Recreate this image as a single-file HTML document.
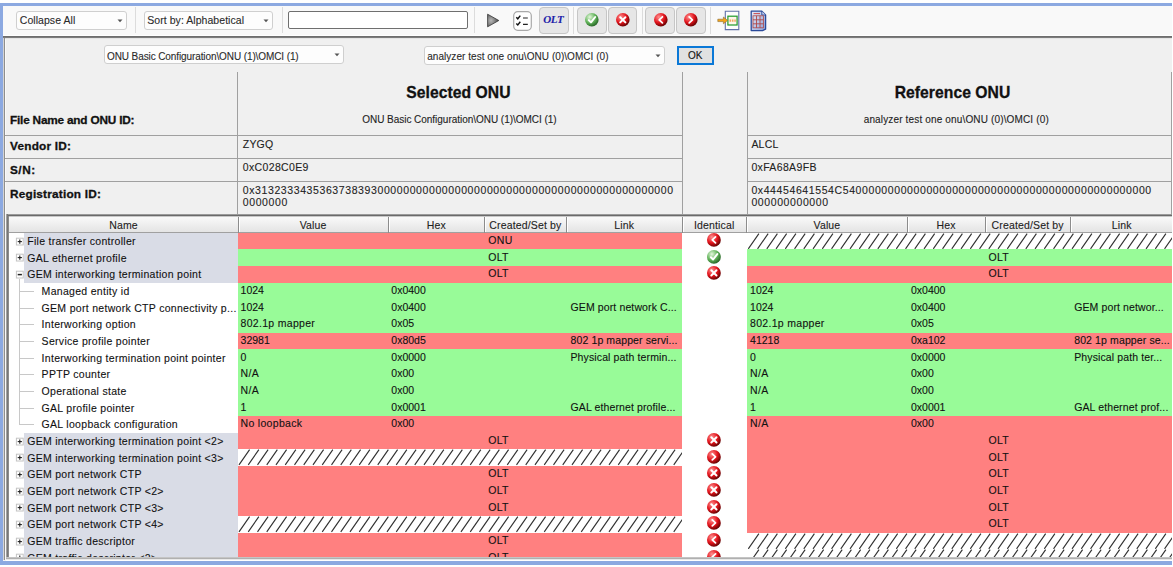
<!DOCTYPE html><html><head><meta charset="utf-8"><style>
html,body{margin:0;padding:0;}
body{width:1173px;height:567px;overflow:hidden;position:relative;background:#fff;font-family:"Liberation Sans",sans-serif;}
.t{position:absolute;white-space:pre;line-height:1;-webkit-text-stroke:0.1px currentColor;}
div{box-sizing:border-box;}
</style></head><body>
<div style="position:absolute;left:0px;top:3px;width:1173px;height:562px;background:#8ca9e1;"></div>
<div style="position:absolute;left:3px;top:6px;width:1170px;height:30px;background:#f9f9f9;"></div>
<div style="position:absolute;left:3px;top:35px;width:1170px;height:1px;background:#ffffff;"></div>
<div style="position:absolute;left:3px;top:36px;width:1170px;height:1px;background:#6e6e6e;"></div>
<div style="position:absolute;left:3px;top:37px;width:1170px;height:1px;background:#7c7c7c;"></div>
<div style="position:absolute;left:3px;top:38px;width:1170px;height:523px;background:#f0f0f0;"></div>
<div style="position:absolute;left:3px;top:38px;width:1px;height:522px;background:#d4d4d4;"></div>
<div style="position:absolute;left:4px;top:38px;width:1px;height:522px;background:#8e8e8e;"></div>
<div style="position:absolute;left:5px;top:38px;width:1px;height:522px;background:#fafafa;"></div>
<div style="position:absolute;left:5px;top:38px;width:1168px;height:1px;background:#e4e4e4;"></div>
<div style="position:absolute;left:3px;top:560px;width:1170px;height:1px;background:#f4f4f4;"></div>
<div style="position:absolute;left:16px;top:11.4px;width:110.6px;height:18.2px;background:#fdfdfd;border:1px solid #cfcfcf;border-radius:3px;"></div>
<div class="t" style="left:19.8px;top:15px;font-size:10.5px;letter-spacing:0.05px;color:#2a2a2a;font-weight:normal;-webkit-text-stroke:0.1px #2a2a2a;">Collapse All</div>
<svg style="position:absolute;left:116.6px;top:19.0px" width="6" height="4"><path d="M0.5 0.5 L5.5 0.5 L3 3.2 Z" fill="#555"/></svg>
<div style="position:absolute;left:135px;top:7px;width:1px;height:26px;background:#dcdcdc;"></div>
<div style="position:absolute;left:143.5px;top:11.4px;width:129px;height:18.2px;background:#fdfdfd;border:1px solid #cfcfcf;border-radius:3px;"></div>
<div class="t" style="left:147.3px;top:15px;font-size:10.5px;letter-spacing:0.05px;color:#2a2a2a;font-weight:normal;-webkit-text-stroke:0.1px #2a2a2a;">Sort by: Alphabetical</div>
<svg style="position:absolute;left:262.5px;top:19.0px" width="6" height="4"><path d="M0.5 0.5 L5.5 0.5 L3 3.2 Z" fill="#555"/></svg>
<div style="position:absolute;left:282px;top:7px;width:1px;height:26px;background:#dcdcdc;"></div>
<div style="position:absolute;left:287.6px;top:11.2px;width:180px;height:17.4px;background:#fff;border:1.5px solid #6f6f6f;border-radius:2px;"></div>
<div style="position:absolute;left:474px;top:7px;width:1px;height:26px;background:#dcdcdc;"></div>
<svg style="position:absolute;left:486px;top:13px" width="14" height="15"><defs><radialGradient id="pg" cx="0.3" cy="0.5" r="0.8"><stop offset="0" stop-color="#b8b8b8"/><stop offset="1" stop-color="#3c3c3c"/></radialGradient></defs><path d="M1.6 1.2 L12.8 7.5 L1.6 13.8 Z" fill="url(#pg)" stroke="#333" stroke-width="0.8" stroke-linejoin="round"/></svg>
<svg style="position:absolute;left:513px;top:11px" width="19" height="20"><rect x="0.7" y="0.7" width="17.6" height="18.6" rx="4" fill="#fff" stroke="#a9a9a9" stroke-width="1.2"/><path d="M3.3 6.2 L4.8 7.8 L7.3 4.6 M3.3 12.4 L4.8 14 L7.3 10.8" fill="none" stroke="#111" stroke-width="1.4"/><path d="M10 7 H14.8 M10 13.3 H14.8" stroke="#222" stroke-width="1.2"/></svg>
<div style="position:absolute;left:539.1px;top:7.1px;width:29.7px;height:27px;background:#e6e6e6;border:1px solid #c6c6c6;border-radius:4px;"></div>
<div class="t" style="left:543.2px;top:13.5px;font-family:'Liberation Serif',serif;font-style:italic;font-weight:bold;font-size:11px;color:#1f1faa;letter-spacing:-0.35px;">OLT</div>
<div style="position:absolute;left:573px;top:7px;width:1px;height:27px;background:#dcdcdc;"></div>
<div style="position:absolute;left:576.6px;top:7.1px;width:30px;height:27px;background:#e6e6e6;border:1px solid #c6c6c6;border-radius:4px;"></div>
<div style="position:absolute;left:607.7px;top:7.1px;width:29.8px;height:27px;background:#e6e6e6;border:1px solid #c6c6c6;border-radius:4px;"></div>
<div style="position:absolute;left:641.5px;top:7px;width:1px;height:27px;background:#dcdcdc;"></div>
<div style="position:absolute;left:645.2px;top:7.1px;width:29.8px;height:27px;background:#e6e6e6;border:1px solid #c6c6c6;border-radius:4px;"></div>
<div style="position:absolute;left:676.3px;top:7.1px;width:29.7px;height:27px;background:#e6e6e6;border:1px solid #c6c6c6;border-radius:4px;"></div>
<div style="position:absolute;left:710px;top:7px;width:1px;height:27px;background:#dcdcdc;"></div>
<svg style="position:absolute;left:584.20px;top:12.20px" width="15.6" height="15.6"><defs><radialGradient id="g33" cx="0.35" cy="0.3" r="0.75"><stop offset="0" stop-color="#e4f6dc"/><stop offset="0.55" stop-color="#62b45a"/><stop offset="1" stop-color="#235f23"/></radialGradient></defs><circle cx="7.8" cy="7.8" r="6.8" fill="url(#g33)"/><path d="M4.8 8.1 L7.0 10.4 L11.2 5.0" fill="none" stroke="#fff" stroke-width="2" stroke-linecap="round" stroke-linejoin="round"/></svg>
<svg style="position:absolute;left:614.80px;top:12.00px" width="15.6" height="15.6"><defs><radialGradient id="g34" cx="0.35" cy="0.3" r="0.75"><stop offset="0" stop-color="#ff9090"/><stop offset="0.55" stop-color="#e3141c"/><stop offset="1" stop-color="#5a0000"/></radialGradient></defs><circle cx="7.8" cy="7.8" r="6.8" fill="url(#g34)"/><path d="M5.199999999999999 5.199999999999999 L10.4 10.4 M10.4 5.199999999999999 L5.199999999999999 10.4" stroke="#fff" stroke-width="2" stroke-linecap="round"/></svg>
<svg style="position:absolute;left:652.70px;top:12.00px" width="15.6" height="15.6"><defs><radialGradient id="g35" cx="0.35" cy="0.3" r="0.75"><stop offset="0" stop-color="#ff9090"/><stop offset="0.55" stop-color="#e3141c"/><stop offset="1" stop-color="#5a0000"/></radialGradient></defs><circle cx="7.8" cy="7.8" r="6.8" fill="url(#g35)"/><path d="M9.4 4.8 L6.199999999999999 7.8 L9.4 10.8" fill="none" stroke="#fff" stroke-width="1.8" stroke-linecap="round" stroke-linejoin="round"/></svg>
<svg style="position:absolute;left:683.00px;top:12.00px" width="15.6" height="15.6"><defs><radialGradient id="g36" cx="0.35" cy="0.3" r="0.75"><stop offset="0" stop-color="#ff9090"/><stop offset="0.55" stop-color="#e3141c"/><stop offset="1" stop-color="#5a0000"/></radialGradient></defs><circle cx="7.8" cy="7.8" r="6.8" fill="url(#g36)"/><path d="M6.199999999999999 4.8 L9.4 7.8 L6.199999999999999 10.8" fill="none" stroke="#fff" stroke-width="1.8" stroke-linecap="round" stroke-linejoin="round"/></svg>
<svg style="position:absolute;left:717px;top:10px" width="23" height="21"><path d="M8.3 1.2 H21.8 V19.6 H8.3 Z" fill="#fdfdfd" stroke="#6070a8" stroke-width="1.1"/><rect x="10.9" y="6.2" width="9.2" height="8.8" fill="#fff6ea" stroke="#1f9a2a" stroke-width="1.2"/><path d="M12.5 10.6 H18.8" stroke="#f2a860" stroke-width="2.2" stroke-dasharray="1.6 0.8"/><path d="M0.8 9.2 H6.4 V7 L10.6 10.4 L6.4 13.8 V11.6 H0.8 Z" fill="#f4a416" stroke="#8a6a30" stroke-width="0.6" stroke-linejoin="round"/></svg>
<svg style="position:absolute;left:750px;top:10px" width="17" height="22"><defs><linearGradient id="rg" x1="0" y1="0" x2="1" y2="1"><stop offset="0" stop-color="#e8ecf8"/><stop offset="1" stop-color="#8aa0d8"/></linearGradient></defs><path d="M1.2 1.2 H11.8 L15.6 5 V19.2 L12.5 20.6 H1.2 Z" fill="url(#rg)" stroke="#2a4a9a" stroke-width="1.3" stroke-linejoin="round"/><path d="M11.8 1.2 V5 H15.6" fill="#c8d2ee" stroke="#2a4a9a" stroke-width="0.9"/><path d="M3.5 3.6 H10" stroke="#c83a3a" stroke-width="0.9"/><rect x="3" y="5.8" width="10.4" height="12" fill="none" stroke="#b04848" stroke-width="0.8"/><path d="M3 9.8 H13.4 M3 13.8 H13.4 M6.5 5.8 V17.8 M10 5.8 V17.8" stroke="#b04848" stroke-width="0.9"/></svg>
<div style="position:absolute;left:104.3px;top:45.2px;width:240px;height:18.8px;background:#fdfdfd;border:1px solid #cfcfcf;border-radius:3px;"></div>
<div class="t" style="left:107.0px;top:52px;font-size:10px;letter-spacing:-0.1px;color:#2a2a2a;font-weight:normal;-webkit-text-stroke:0.1px #2a2a2a;">ONU Basic Configuration\ONU (1)\OMCI (1)</div>
<svg style="position:absolute;left:334.3px;top:53.1px" width="6" height="4"><path d="M0.5 0.5 L5.5 0.5 L3 3.2 Z" fill="#555"/></svg>
<div style="position:absolute;left:423.9px;top:46px;width:241.4px;height:18.8px;background:#fdfdfd;border:1px solid #cfcfcf;border-radius:3px;"></div>
<div class="t" style="left:427.2px;top:52px;font-size:10px;letter-spacing:0.05px;color:#2a2a2a;font-weight:normal;-webkit-text-stroke:0.1px #2a2a2a;">analyzer test one onu\ONU (0)\OMCI (0)</div>
<svg style="position:absolute;left:655.3px;top:53.9px" width="6" height="4"><path d="M0.5 0.5 L5.5 0.5 L3 3.2 Z" fill="#555"/></svg>
<div style="position:absolute;left:676.7px;top:45.5px;width:37.1px;height:19.2px;background:#e1e1e1;border:2px solid #0a78d7;"></div>
<div class="t" style="left:495.30px;width:400px;text-align:center;top:51px;font-size:10px;letter-spacing:0.0px;color:#111;font-weight:normal;">OK</div>
<div style="position:absolute;left:237px;top:72px;width:1px;height:142px;background:#a0a0a0;"></div>
<div style="position:absolute;left:681.5px;top:72px;width:1px;height:142px;background:#a0a0a0;"></div>
<div style="position:absolute;left:746.5px;top:72px;width:1px;height:142px;background:#a0a0a0;"></div>
<div style="position:absolute;left:1171px;top:72px;width:1px;height:142px;background:#a0a0a0;"></div>
<div style="position:absolute;left:5px;top:135px;width:677px;height:1px;background:#a0a0a0;"></div>
<div style="position:absolute;left:747px;top:135px;width:424px;height:1px;background:#a0a0a0;"></div>
<div style="position:absolute;left:5px;top:158px;width:677px;height:1px;background:#a0a0a0;"></div>
<div style="position:absolute;left:747px;top:158px;width:424px;height:1px;background:#a0a0a0;"></div>
<div style="position:absolute;left:5px;top:181px;width:677px;height:1px;background:#a0a0a0;"></div>
<div style="position:absolute;left:747px;top:181px;width:424px;height:1px;background:#a0a0a0;"></div>
<div class="t" style="left:10.0px;top:115px;font-size:11.8px;letter-spacing:-0.2px;color:#111;font-weight:bold;-webkit-text-stroke:0.3px currentColor;">File Name and ONU ID:</div>
<div class="t" style="left:10.0px;top:141px;font-size:11.8px;letter-spacing:0.22px;color:#111;font-weight:bold;-webkit-text-stroke:0.3px currentColor;">Vendor ID:</div>
<div class="t" style="left:10.0px;top:165px;font-size:11.8px;letter-spacing:0.5px;color:#111;font-weight:bold;-webkit-text-stroke:0.3px currentColor;">S/N:</div>
<div class="t" style="left:10.0px;top:189px;font-size:11.8px;letter-spacing:0.2px;color:#111;font-weight:bold;-webkit-text-stroke:0.3px currentColor;">Registration ID:</div>
<div class="t" style="left:258.40px;width:400px;text-align:center;top:85px;font-size:15.7px;letter-spacing:0.05px;color:#111;font-weight:bold;-webkit-text-stroke:0.3px currentColor;">Selected ONU</div>
<div class="t" style="left:752.50px;width:400px;text-align:center;top:85px;font-size:15.7px;letter-spacing:0.05px;color:#111;font-weight:bold;-webkit-text-stroke:0.3px currentColor;">Reference ONU</div>
<div class="t" style="left:259.40px;width:400px;text-align:center;top:115px;font-size:10px;letter-spacing:-0.03px;color:#222;font-weight:normal;">ONU Basic Configuration\ONU (1)\OMCI (1)</div>
<div class="t" style="left:756.30px;width:400px;text-align:center;top:115px;font-size:10px;letter-spacing:0.15px;color:#222;font-weight:normal;">analyzer test one onu\ONU (0)\OMCI (0)</div>
<div class="t" style="left:242.8px;top:139px;font-size:10.5px;letter-spacing:0.2px;color:#222;font-weight:normal;">ZYGQ</div>
<div class="t" style="left:242.8px;top:162px;font-size:10.5px;letter-spacing:0.35px;color:#222;font-weight:normal;">0xC028C0E9</div>
<div class="t" style="left:242.8px;top:185px;font-size:10.5px;letter-spacing:0.6px;color:#222;font-weight:normal;">0x31323334353637383930000000000000000000000000000000000000000000000</div>
<div class="t" style="left:242.8px;top:197px;font-size:10.5px;letter-spacing:0.6px;color:#222;font-weight:normal;">0000000</div>
<div class="t" style="left:751.4px;top:139px;font-size:10.5px;letter-spacing:0.2px;color:#222;font-weight:normal;">ALCL</div>
<div class="t" style="left:751.4px;top:162px;font-size:10.5px;letter-spacing:0.35px;color:#222;font-weight:normal;">0xFA68A9FB</div>
<div class="t" style="left:751.4px;top:185px;font-size:10.5px;letter-spacing:0.6px;color:#222;font-weight:normal;">0x44454641554C540000000000000000000000000000000000000000000000</div>
<div class="t" style="left:751.4px;top:197px;font-size:10.5px;letter-spacing:0.6px;color:#222;font-weight:normal;">000000000000</div>
<div style="position:absolute;left:6px;top:214px;width:1167px;height:347px;background:#fff;"></div>
<div style="position:absolute;left:6px;top:214px;width:1167px;height:1px;background:#9a9a9a;"></div>
<div style="position:absolute;left:6px;top:215px;width:1167px;height:1px;background:#6a6a6a;"></div>
<div style="position:absolute;left:6px;top:216px;width:1167px;height:1px;background:#c8c8c8;"></div>
<div style="position:absolute;left:6px;top:214px;width:1px;height:345px;background:#a2a2a2;"></div>
<div style="position:absolute;left:7px;top:214px;width:1px;height:345px;background:#777777;"></div>
<div style="position:absolute;left:8px;top:216px;width:1px;height:341px;background:#8c8c8c;"></div>
<div style="position:absolute;left:6px;top:557px;width:1167px;height:1px;background:#c4c4c4;"></div>
<div style="position:absolute;left:6px;top:558px;width:1167px;height:1px;background:#b0b0b0;"></div>
<div style="position:absolute;left:6px;top:559px;width:1167px;height:1px;background:#e8e8e8;"></div>
<div style="position:absolute;left:9px;top:217px;width:229.0px;height:15.5px;background:linear-gradient(#f9f9f9,#e4e4e4);border-bottom:1px solid #a0a0a0;"></div>
<div style="position:absolute;left:238.0px;top:217px;width:150.3px;height:15.5px;background:linear-gradient(#f9f9f9,#e4e4e4);border-bottom:1px solid #a0a0a0;"></div>
<div style="position:absolute;left:388.3px;top:217px;width:96.0px;height:15.5px;background:linear-gradient(#f9f9f9,#e4e4e4);border-bottom:1px solid #a0a0a0;"></div>
<div style="position:absolute;left:484.3px;top:217px;width:82.30000000000001px;height:15.5px;background:linear-gradient(#f9f9f9,#e4e4e4);border-bottom:1px solid #a0a0a0;"></div>
<div style="position:absolute;left:566.6px;top:217px;width:115.19999999999993px;height:15.5px;background:linear-gradient(#f9f9f9,#e4e4e4);border-bottom:1px solid #a0a0a0;"></div>
<div style="position:absolute;left:681.8px;top:217px;width:64.80000000000007px;height:15.5px;background:linear-gradient(#f9f9f9,#e4e4e4);border-bottom:1px solid #a0a0a0;"></div>
<div style="position:absolute;left:746.6px;top:217px;width:160.69999999999993px;height:15.5px;background:linear-gradient(#f9f9f9,#e4e4e4);border-bottom:1px solid #a0a0a0;"></div>
<div style="position:absolute;left:907.3px;top:217px;width:77.5px;height:15.5px;background:linear-gradient(#f9f9f9,#e4e4e4);border-bottom:1px solid #a0a0a0;"></div>
<div style="position:absolute;left:984.8px;top:217px;width:85.79999999999995px;height:15.5px;background:linear-gradient(#f9f9f9,#e4e4e4);border-bottom:1px solid #a0a0a0;"></div>
<div style="position:absolute;left:1070.6px;top:217px;width:102.40000000000009px;height:15.5px;background:linear-gradient(#f9f9f9,#e4e4e4);border-bottom:1px solid #a0a0a0;"></div>
<div style="position:absolute;left:237.7px;top:217px;width:1px;height:15.5px;background:#8c8c8c;"></div>
<div style="position:absolute;left:238.7px;top:217px;width:1px;height:14.5px;background:#fff;"></div>
<div class="t" style="left:-76.50px;width:400px;text-align:center;top:220px;font-size:10.5px;letter-spacing:0.15px;color:#222;font-weight:normal;">Name</div>
<div style="position:absolute;left:388.0px;top:217px;width:1px;height:15.5px;background:#8c8c8c;"></div>
<div style="position:absolute;left:389.0px;top:217px;width:1px;height:14.5px;background:#fff;"></div>
<div class="t" style="left:113.15px;width:400px;text-align:center;top:220px;font-size:10.5px;letter-spacing:0.15px;color:#222;font-weight:normal;">Value</div>
<div style="position:absolute;left:484.0px;top:217px;width:1px;height:15.5px;background:#8c8c8c;"></div>
<div style="position:absolute;left:485.0px;top:217px;width:1px;height:14.5px;background:#fff;"></div>
<div class="t" style="left:236.30px;width:400px;text-align:center;top:220px;font-size:10.5px;letter-spacing:0.15px;color:#222;font-weight:normal;">Hex</div>
<div style="position:absolute;left:566.3000000000001px;top:217px;width:1px;height:15.5px;background:#8c8c8c;"></div>
<div style="position:absolute;left:567.3000000000001px;top:217px;width:1px;height:14.5px;background:#fff;"></div>
<div class="t" style="left:325.45px;width:400px;text-align:center;top:220px;font-size:10.5px;letter-spacing:0.15px;color:#222;font-weight:normal;">Created/Set by</div>
<div style="position:absolute;left:681.5px;top:217px;width:1px;height:15.5px;background:#8c8c8c;"></div>
<div style="position:absolute;left:682.5px;top:217px;width:1px;height:14.5px;background:#fff;"></div>
<div class="t" style="left:424.20px;width:400px;text-align:center;top:220px;font-size:10.5px;letter-spacing:0.15px;color:#222;font-weight:normal;">Link</div>
<div style="position:absolute;left:746.3000000000001px;top:217px;width:1px;height:15.5px;background:#8c8c8c;"></div>
<div style="position:absolute;left:747.3000000000001px;top:217px;width:1px;height:14.5px;background:#fff;"></div>
<div class="t" style="left:514.20px;width:400px;text-align:center;top:220px;font-size:10.5px;letter-spacing:0.15px;color:#222;font-weight:normal;">Identical</div>
<div style="position:absolute;left:907.0px;top:217px;width:1px;height:15.5px;background:#8c8c8c;"></div>
<div style="position:absolute;left:908.0px;top:217px;width:1px;height:14.5px;background:#fff;"></div>
<div class="t" style="left:626.95px;width:400px;text-align:center;top:220px;font-size:10.5px;letter-spacing:0.15px;color:#222;font-weight:normal;">Value</div>
<div style="position:absolute;left:984.5px;top:217px;width:1px;height:15.5px;background:#8c8c8c;"></div>
<div style="position:absolute;left:985.5px;top:217px;width:1px;height:14.5px;background:#fff;"></div>
<div class="t" style="left:746.05px;width:400px;text-align:center;top:220px;font-size:10.5px;letter-spacing:0.15px;color:#222;font-weight:normal;">Hex</div>
<div style="position:absolute;left:1070.3px;top:217px;width:1px;height:15.5px;background:#8c8c8c;"></div>
<div style="position:absolute;left:1071.3px;top:217px;width:1px;height:14.5px;background:#fff;"></div>
<div class="t" style="left:827.70px;width:400px;text-align:center;top:220px;font-size:10.5px;letter-spacing:0.15px;color:#222;font-weight:normal;">Created/Set by</div>
<div class="t" style="left:921.80px;width:400px;text-align:center;top:220px;font-size:10.5px;letter-spacing:0.15px;color:#222;font-weight:normal;">Link</div>
<div style="position:absolute;left:0;top:0;width:1173px;height:556.8px;overflow:hidden;">
<div style="position:absolute;left:24px;top:232.66px;width:214px;height:16.676000000000002px;background:#d9dce6;"></div>
<svg style="position:absolute;left:0px;top:232.660px" width="30" height="17"><rect x="16.4" y="5.2" width="6.8" height="6.8" fill="#fff" stroke="#c4c4c4"/><path d="M17.7 8.6 H21.9" stroke="#222" stroke-width="1.1"/><path d="M19.8 6.5 V10.7" stroke="#222" stroke-width="1.1"/></svg>
<div class="t" style="left:27.2px;top:236px;font-size:10.5px;letter-spacing:0.3px;color:#111;font-weight:normal;">File transfer controller</div>
<div style="position:absolute;left:238px;top:232.66px;width:444px;height:16.676000000000002px;background:#ff8080;"></div>
<div class="t" style="left:488.3px;top:235px;font-size:10.5px;letter-spacing:0.3px;color:#111;font-weight:normal;">ONU</div>
<svg style="position:absolute;left:705.50px;top:231.96px" width="15.8" height="15.8"><defs><radialGradient id="g127" cx="0.35" cy="0.3" r="0.75"><stop offset="0" stop-color="#ff9090"/><stop offset="0.55" stop-color="#e3141c"/><stop offset="1" stop-color="#5a0000"/></radialGradient></defs><circle cx="7.9" cy="7.9" r="6.9" fill="url(#g127)"/><path d="M9.5 4.9 L6.300000000000001 7.9 L9.5 10.9" fill="none" stroke="#fff" stroke-width="1.8" stroke-linecap="round" stroke-linejoin="round"/></svg>
<svg style="position:absolute;left:747px;top:232.66px" width="426.00" height="16.67"><path d="M1.30 15.87 L11.90 0.6 M10.55 15.87 L21.15 0.6 M19.80 15.87 L30.40 0.6 M29.05 15.87 L39.65 0.6 M38.30 15.87 L48.90 0.6 M47.55 15.87 L58.15 0.6 M56.80 15.87 L67.40 0.6 M66.05 15.87 L76.65 0.6 M75.30 15.87 L85.90 0.6 M84.55 15.87 L95.15 0.6 M93.80 15.87 L104.40 0.6 M103.05 15.87 L113.65 0.6 M112.30 15.87 L122.90 0.6 M121.55 15.87 L132.15 0.6 M130.80 15.87 L141.40 0.6 M140.05 15.87 L150.65 0.6 M149.30 15.87 L159.90 0.6 M158.55 15.87 L169.15 0.6 M167.80 15.87 L178.40 0.6 M177.05 15.87 L187.65 0.6 M186.30 15.87 L196.90 0.6 M195.55 15.87 L206.15 0.6 M204.80 15.87 L215.40 0.6 M214.05 15.87 L224.65 0.6 M223.30 15.87 L233.90 0.6 M232.55 15.87 L243.15 0.6 M241.80 15.87 L252.40 0.6 M251.05 15.87 L261.65 0.6 M260.30 15.87 L270.90 0.6 M269.55 15.87 L280.15 0.6 M278.80 15.87 L289.40 0.6 M288.05 15.87 L298.65 0.6 M297.30 15.87 L307.90 0.6 M306.55 15.87 L317.15 0.6 M315.80 15.87 L326.40 0.6 M325.05 15.87 L335.65 0.6 M334.30 15.87 L344.90 0.6 M343.55 15.87 L354.15 0.6 M352.80 15.87 L363.40 0.6 M362.05 15.87 L372.65 0.6 M371.30 15.87 L381.90 0.6 M380.55 15.87 L391.15 0.6 M389.80 15.87 L400.40 0.6 M399.05 15.87 L409.65 0.6 M408.30 15.87 L418.90 0.6 M417.55 15.87 L428.15 0.6 M426.80 15.87 L437.40 0.6 M436.05 15.87 L446.65 0.6" stroke="#333" stroke-width="1.15" fill="none"/></svg>
<div style="position:absolute;left:24px;top:249.326px;width:214px;height:16.676000000000002px;background:#d9dce6;"></div>
<svg style="position:absolute;left:0px;top:249.326px" width="30" height="17"><rect x="16.4" y="5.2" width="6.8" height="6.8" fill="#fff" stroke="#c4c4c4"/><path d="M17.7 8.6 H21.9" stroke="#222" stroke-width="1.1"/><path d="M19.8 6.5 V10.7" stroke="#222" stroke-width="1.1"/></svg>
<div class="t" style="left:27.2px;top:253px;font-size:10.5px;letter-spacing:0.3px;color:#111;font-weight:normal;">GAL ethernet profile</div>
<div style="position:absolute;left:238px;top:249.326px;width:444px;height:16.676000000000002px;background:#98fb98;"></div>
<div class="t" style="left:488.3px;top:252px;font-size:10.5px;letter-spacing:0.3px;color:#111;font-weight:normal;">OLT</div>
<svg style="position:absolute;left:705.50px;top:248.63px" width="15.8" height="15.8"><defs><radialGradient id="g134" cx="0.35" cy="0.3" r="0.75"><stop offset="0" stop-color="#e4f6dc"/><stop offset="0.55" stop-color="#62b45a"/><stop offset="1" stop-color="#235f23"/></radialGradient></defs><circle cx="7.9" cy="7.9" r="6.9" fill="url(#g134)"/><path d="M4.9 8.200000000000001 L7.1000000000000005 10.5 L11.3 5.1000000000000005" fill="none" stroke="#fff" stroke-width="2" stroke-linecap="round" stroke-linejoin="round"/></svg>
<div style="position:absolute;left:747px;top:249.326px;width:426px;height:16.676000000000002px;background:#98fb98;"></div>
<div class="t" style="left:988.5px;top:252px;font-size:10.5px;letter-spacing:0.3px;color:#111;font-weight:normal;">OLT</div>
<div style="position:absolute;left:24px;top:265.992px;width:214px;height:16.676000000000002px;background:#d9dce6;"></div>
<svg style="position:absolute;left:0px;top:265.992px" width="30" height="17"><rect x="16.4" y="5.2" width="6.8" height="6.8" fill="#fff" stroke="#c4c4c4"/><path d="M17.7 8.6 H21.9" stroke="#222" stroke-width="1.5"/></svg>
<div class="t" style="left:27.2px;top:269px;font-size:10.5px;letter-spacing:0.3px;color:#111;font-weight:normal;">GEM interworking termination point</div>
<div style="position:absolute;left:19px;top:278.992px;width:1px;height:4.166px;background:#c8c8c8;"></div>
<div style="position:absolute;left:238px;top:265.992px;width:444px;height:16.676000000000002px;background:#ff8080;"></div>
<div class="t" style="left:488.3px;top:268px;font-size:10.5px;letter-spacing:0.3px;color:#111;font-weight:normal;">OLT</div>
<svg style="position:absolute;left:705.50px;top:265.29px" width="15.8" height="15.8"><defs><radialGradient id="g143" cx="0.35" cy="0.3" r="0.75"><stop offset="0" stop-color="#ff9090"/><stop offset="0.55" stop-color="#e3141c"/><stop offset="1" stop-color="#5a0000"/></radialGradient></defs><circle cx="7.9" cy="7.9" r="6.9" fill="url(#g143)"/><path d="M5.300000000000001 5.300000000000001 L10.5 10.5 M10.5 5.300000000000001 L5.300000000000001 10.5" stroke="#fff" stroke-width="2" stroke-linecap="round"/></svg>
<div style="position:absolute;left:747px;top:265.992px;width:426px;height:16.676000000000002px;background:#ff8080;"></div>
<div class="t" style="left:988.5px;top:268px;font-size:10.5px;letter-spacing:0.3px;color:#111;font-weight:normal;">OLT</div>
<div style="position:absolute;left:19px;top:282.658px;width:1px;height:17.166px;background:#c8c8c8;"></div>
<div style="position:absolute;left:19px;top:290.99100000000004px;width:15px;height:1px;background:#c8c8c8;"></div>
<div class="t" style="left:41.6px;top:286px;font-size:10.5px;letter-spacing:0.3px;color:#111;font-weight:normal;">Managed entity id</div>
<div style="position:absolute;left:238px;top:282.658px;width:444px;height:16.676000000000002px;background:#98fb98;"></div>
<div class="t" style="left:240.6px;top:285px;font-size:10.5px;letter-spacing:0.0px;color:#111;font-weight:normal;">1024</div>
<div class="t" style="left:391.3px;top:285px;font-size:10.5px;letter-spacing:0.0px;color:#111;font-weight:normal;">0x0400</div>
<div style="position:absolute;left:747px;top:282.658px;width:426px;height:16.676000000000002px;background:#98fb98;"></div>
<div class="t" style="left:750.1px;top:285px;font-size:10.5px;letter-spacing:0.0px;color:#111;font-weight:normal;">1024</div>
<div class="t" style="left:911px;top:285px;font-size:10.5px;letter-spacing:0.0px;color:#111;font-weight:normal;">0x0400</div>
<div style="position:absolute;left:19px;top:299.324px;width:1px;height:17.166px;background:#c8c8c8;"></div>
<div style="position:absolute;left:19px;top:307.65700000000004px;width:15px;height:1px;background:#c8c8c8;"></div>
<div class="t" style="left:41.6px;top:303px;font-size:10.5px;letter-spacing:0.3px;color:#111;font-weight:normal;">GEM port network CTP connectivity p...</div>
<div style="position:absolute;left:238px;top:299.324px;width:444px;height:16.676000000000002px;background:#98fb98;"></div>
<div class="t" style="left:240.6px;top:302px;font-size:10.5px;letter-spacing:0.0px;color:#111;font-weight:normal;">1024</div>
<div class="t" style="left:391.3px;top:302px;font-size:10.5px;letter-spacing:0.0px;color:#111;font-weight:normal;">0x0400</div>
<div class="t" style="left:570.5px;top:302px;font-size:10.5px;letter-spacing:0.12px;color:#111;font-weight:normal;">GEM port network C...</div>
<div style="position:absolute;left:747px;top:299.324px;width:426px;height:16.676000000000002px;background:#98fb98;"></div>
<div class="t" style="left:750.1px;top:302px;font-size:10.5px;letter-spacing:0.0px;color:#111;font-weight:normal;">1024</div>
<div class="t" style="left:911px;top:302px;font-size:10.5px;letter-spacing:0.0px;color:#111;font-weight:normal;">0x0400</div>
<div class="t" style="left:1074.2px;top:302px;font-size:10.5px;letter-spacing:0.12px;color:#111;font-weight:normal;">GEM port networ...</div>
<div style="position:absolute;left:19px;top:315.99px;width:1px;height:17.166px;background:#c8c8c8;"></div>
<div style="position:absolute;left:19px;top:324.32300000000004px;width:15px;height:1px;background:#c8c8c8;"></div>
<div class="t" style="left:41.6px;top:319px;font-size:10.5px;letter-spacing:0.3px;color:#111;font-weight:normal;">Interworking option</div>
<div style="position:absolute;left:238px;top:315.99px;width:444px;height:16.676000000000002px;background:#98fb98;"></div>
<div class="t" style="left:240.6px;top:318px;font-size:10.5px;letter-spacing:0.3px;color:#111;font-weight:normal;">802.1p mapper</div>
<div class="t" style="left:391.3px;top:318px;font-size:10.5px;letter-spacing:0.0px;color:#111;font-weight:normal;">0x05</div>
<div style="position:absolute;left:747px;top:315.99px;width:426px;height:16.676000000000002px;background:#98fb98;"></div>
<div class="t" style="left:750.1px;top:318px;font-size:10.5px;letter-spacing:0.3px;color:#111;font-weight:normal;">802.1p mapper</div>
<div class="t" style="left:911px;top:318px;font-size:10.5px;letter-spacing:0.0px;color:#111;font-weight:normal;">0x05</div>
<div style="position:absolute;left:19px;top:332.656px;width:1px;height:17.166px;background:#c8c8c8;"></div>
<div style="position:absolute;left:19px;top:340.98900000000003px;width:15px;height:1px;background:#c8c8c8;"></div>
<div class="t" style="left:41.6px;top:336px;font-size:10.5px;letter-spacing:0.3px;color:#111;font-weight:normal;">Service profile pointer</div>
<div style="position:absolute;left:238px;top:332.656px;width:444px;height:16.676000000000002px;background:#ff8080;"></div>
<div class="t" style="left:240.6px;top:335px;font-size:10.5px;letter-spacing:0.0px;color:#111;font-weight:normal;">32981</div>
<div class="t" style="left:391.3px;top:335px;font-size:10.5px;letter-spacing:0.0px;color:#111;font-weight:normal;">0x80d5</div>
<div class="t" style="left:570.5px;top:335px;font-size:10.5px;letter-spacing:0.12px;color:#111;font-weight:normal;">802 1p mapper servi...</div>
<div style="position:absolute;left:747px;top:332.656px;width:426px;height:16.676000000000002px;background:#ff8080;"></div>
<div class="t" style="left:750.1px;top:335px;font-size:10.5px;letter-spacing:0.0px;color:#111;font-weight:normal;">41218</div>
<div class="t" style="left:911px;top:335px;font-size:10.5px;letter-spacing:0.0px;color:#111;font-weight:normal;">0xa102</div>
<div class="t" style="left:1074.2px;top:335px;font-size:10.5px;letter-spacing:0.12px;color:#111;font-weight:normal;">802 1p mapper se...</div>
<div style="position:absolute;left:19px;top:349.322px;width:1px;height:17.166px;background:#c8c8c8;"></div>
<div style="position:absolute;left:19px;top:357.65500000000003px;width:15px;height:1px;background:#c8c8c8;"></div>
<div class="t" style="left:41.6px;top:353px;font-size:10.5px;letter-spacing:0.3px;color:#111;font-weight:normal;">Interworking termination point pointer</div>
<div style="position:absolute;left:238px;top:349.322px;width:444px;height:16.676000000000002px;background:#98fb98;"></div>
<div class="t" style="left:240.6px;top:352px;font-size:10.5px;letter-spacing:0.0px;color:#111;font-weight:normal;">0</div>
<div class="t" style="left:391.3px;top:352px;font-size:10.5px;letter-spacing:0.0px;color:#111;font-weight:normal;">0x0000</div>
<div class="t" style="left:570.5px;top:352px;font-size:10.5px;letter-spacing:0.12px;color:#111;font-weight:normal;">Physical path termin...</div>
<div style="position:absolute;left:747px;top:349.322px;width:426px;height:16.676000000000002px;background:#98fb98;"></div>
<div class="t" style="left:750.1px;top:352px;font-size:10.5px;letter-spacing:0.0px;color:#111;font-weight:normal;">0</div>
<div class="t" style="left:911px;top:352px;font-size:10.5px;letter-spacing:0.0px;color:#111;font-weight:normal;">0x0000</div>
<div class="t" style="left:1074.2px;top:352px;font-size:10.5px;letter-spacing:0.12px;color:#111;font-weight:normal;">Physical path ter...</div>
<div style="position:absolute;left:19px;top:365.988px;width:1px;height:17.166px;background:#c8c8c8;"></div>
<div style="position:absolute;left:19px;top:374.321px;width:15px;height:1px;background:#c8c8c8;"></div>
<div class="t" style="left:41.6px;top:369px;font-size:10.5px;letter-spacing:0.3px;color:#111;font-weight:normal;">PPTP counter</div>
<div style="position:absolute;left:238px;top:365.988px;width:444px;height:16.676000000000002px;background:#98fb98;"></div>
<div class="t" style="left:240.6px;top:368px;font-size:10.5px;letter-spacing:0.3px;color:#111;font-weight:normal;">N/A</div>
<div class="t" style="left:391.3px;top:368px;font-size:10.5px;letter-spacing:0.0px;color:#111;font-weight:normal;">0x00</div>
<div style="position:absolute;left:747px;top:365.988px;width:426px;height:16.676000000000002px;background:#98fb98;"></div>
<div class="t" style="left:750.1px;top:368px;font-size:10.5px;letter-spacing:0.3px;color:#111;font-weight:normal;">N/A</div>
<div class="t" style="left:911px;top:368px;font-size:10.5px;letter-spacing:0.0px;color:#111;font-weight:normal;">0x00</div>
<div style="position:absolute;left:19px;top:382.654px;width:1px;height:17.166px;background:#c8c8c8;"></div>
<div style="position:absolute;left:19px;top:390.987px;width:15px;height:1px;background:#c8c8c8;"></div>
<div class="t" style="left:41.6px;top:386px;font-size:10.5px;letter-spacing:0.3px;color:#111;font-weight:normal;">Operational state</div>
<div style="position:absolute;left:238px;top:382.654px;width:444px;height:16.676000000000002px;background:#98fb98;"></div>
<div class="t" style="left:240.6px;top:385px;font-size:10.5px;letter-spacing:0.3px;color:#111;font-weight:normal;">N/A</div>
<div class="t" style="left:391.3px;top:385px;font-size:10.5px;letter-spacing:0.0px;color:#111;font-weight:normal;">0x00</div>
<div style="position:absolute;left:747px;top:382.654px;width:426px;height:16.676000000000002px;background:#98fb98;"></div>
<div class="t" style="left:750.1px;top:385px;font-size:10.5px;letter-spacing:0.3px;color:#111;font-weight:normal;">N/A</div>
<div class="t" style="left:911px;top:385px;font-size:10.5px;letter-spacing:0.0px;color:#111;font-weight:normal;">0x00</div>
<div style="position:absolute;left:19px;top:399.32px;width:1px;height:17.166px;background:#c8c8c8;"></div>
<div style="position:absolute;left:19px;top:407.653px;width:15px;height:1px;background:#c8c8c8;"></div>
<div class="t" style="left:41.6px;top:403px;font-size:10.5px;letter-spacing:0.3px;color:#111;font-weight:normal;">GAL profile pointer</div>
<div style="position:absolute;left:238px;top:399.32px;width:444px;height:16.676000000000002px;background:#98fb98;"></div>
<div class="t" style="left:240.6px;top:402px;font-size:10.5px;letter-spacing:0.0px;color:#111;font-weight:normal;">1</div>
<div class="t" style="left:391.3px;top:402px;font-size:10.5px;letter-spacing:0.0px;color:#111;font-weight:normal;">0x0001</div>
<div class="t" style="left:570.5px;top:402px;font-size:10.5px;letter-spacing:0.12px;color:#111;font-weight:normal;">GAL ethernet profile...</div>
<div style="position:absolute;left:747px;top:399.32px;width:426px;height:16.676000000000002px;background:#98fb98;"></div>
<div class="t" style="left:750.1px;top:402px;font-size:10.5px;letter-spacing:0.0px;color:#111;font-weight:normal;">1</div>
<div class="t" style="left:911px;top:402px;font-size:10.5px;letter-spacing:0.0px;color:#111;font-weight:normal;">0x0001</div>
<div class="t" style="left:1074.2px;top:402px;font-size:10.5px;letter-spacing:0.12px;color:#111;font-weight:normal;">GAL ethernet prof...</div>
<div style="position:absolute;left:19px;top:415.986px;width:1px;height:8.833px;background:#c8c8c8;"></div>
<div style="position:absolute;left:19px;top:424.319px;width:15px;height:1px;background:#c8c8c8;"></div>
<div class="t" style="left:41.6px;top:419px;font-size:10.5px;letter-spacing:0.3px;color:#111;font-weight:normal;">GAL loopback configuration</div>
<div style="position:absolute;left:238px;top:415.986px;width:444px;height:16.676000000000002px;background:#ff8080;"></div>
<div class="t" style="left:240.6px;top:418px;font-size:10.5px;letter-spacing:0.3px;color:#111;font-weight:normal;">No loopback</div>
<div class="t" style="left:391.3px;top:418px;font-size:10.5px;letter-spacing:0.0px;color:#111;font-weight:normal;">0x00</div>
<div style="position:absolute;left:747px;top:415.986px;width:426px;height:16.676000000000002px;background:#ff8080;"></div>
<div class="t" style="left:750.1px;top:418px;font-size:10.5px;letter-spacing:0.3px;color:#111;font-weight:normal;">N/A</div>
<div class="t" style="left:911px;top:418px;font-size:10.5px;letter-spacing:0.0px;color:#111;font-weight:normal;">0x00</div>
<div style="position:absolute;left:24px;top:432.65200000000004px;width:214px;height:16.676000000000002px;background:#d9dce6;"></div>
<svg style="position:absolute;left:0px;top:432.652px" width="30" height="17"><rect x="16.4" y="5.2" width="6.8" height="6.8" fill="#fff" stroke="#c4c4c4"/><path d="M17.7 8.6 H21.9" stroke="#222" stroke-width="1.1"/><path d="M19.8 6.5 V10.7" stroke="#222" stroke-width="1.1"/></svg>
<div class="t" style="left:27.2px;top:436px;font-size:10.5px;letter-spacing:0.3px;color:#111;font-weight:normal;">GEM interworking termination point &lt;2&gt;</div>
<div style="position:absolute;left:238px;top:432.65200000000004px;width:444px;height:16.676000000000002px;background:#ff8080;"></div>
<div class="t" style="left:488.3px;top:435px;font-size:10.5px;letter-spacing:0.3px;color:#111;font-weight:normal;">OLT</div>
<svg style="position:absolute;left:705.50px;top:431.95px" width="15.8" height="15.8"><defs><radialGradient id="g240" cx="0.35" cy="0.3" r="0.75"><stop offset="0" stop-color="#ff9090"/><stop offset="0.55" stop-color="#e3141c"/><stop offset="1" stop-color="#5a0000"/></radialGradient></defs><circle cx="7.9" cy="7.9" r="6.9" fill="url(#g240)"/><path d="M5.300000000000001 5.300000000000001 L10.5 10.5 M10.5 5.300000000000001 L5.300000000000001 10.5" stroke="#fff" stroke-width="2" stroke-linecap="round"/></svg>
<div style="position:absolute;left:747px;top:432.65200000000004px;width:426px;height:16.676000000000002px;background:#ff8080;"></div>
<div class="t" style="left:988.5px;top:435px;font-size:10.5px;letter-spacing:0.3px;color:#111;font-weight:normal;">OLT</div>
<div style="position:absolute;left:24px;top:449.318px;width:214px;height:16.676000000000002px;background:#d9dce6;"></div>
<svg style="position:absolute;left:0px;top:449.318px" width="30" height="17"><rect x="16.4" y="5.2" width="6.8" height="6.8" fill="#fff" stroke="#c4c4c4"/><path d="M17.7 8.6 H21.9" stroke="#222" stroke-width="1.1"/><path d="M19.8 6.5 V10.7" stroke="#222" stroke-width="1.1"/></svg>
<div class="t" style="left:27.2px;top:453px;font-size:10.5px;letter-spacing:0.3px;color:#111;font-weight:normal;">GEM interworking termination point &lt;3&gt;</div>
<svg style="position:absolute;left:238px;top:449.32px" width="444.00" height="16.67"><path d="M1.00 15.87 L11.60 0.6 M10.25 15.87 L20.85 0.6 M19.50 15.87 L30.10 0.6 M28.75 15.87 L39.35 0.6 M38.00 15.87 L48.60 0.6 M47.25 15.87 L57.85 0.6 M56.50 15.87 L67.10 0.6 M65.75 15.87 L76.35 0.6 M75.00 15.87 L85.60 0.6 M84.25 15.87 L94.85 0.6 M93.50 15.87 L104.10 0.6 M102.75 15.87 L113.35 0.6 M112.00 15.87 L122.60 0.6 M121.25 15.87 L131.85 0.6 M130.50 15.87 L141.10 0.6 M139.75 15.87 L150.35 0.6 M149.00 15.87 L159.60 0.6 M158.25 15.87 L168.85 0.6 M167.50 15.87 L178.10 0.6 M176.75 15.87 L187.35 0.6 M186.00 15.87 L196.60 0.6 M195.25 15.87 L205.85 0.6 M204.50 15.87 L215.10 0.6 M213.75 15.87 L224.35 0.6 M223.00 15.87 L233.60 0.6 M232.25 15.87 L242.85 0.6 M241.50 15.87 L252.10 0.6 M250.75 15.87 L261.35 0.6 M260.00 15.87 L270.60 0.6 M269.25 15.87 L279.85 0.6 M278.50 15.87 L289.10 0.6 M287.75 15.87 L298.35 0.6 M297.00 15.87 L307.60 0.6 M306.25 15.87 L316.85 0.6 M315.50 15.87 L326.10 0.6 M324.75 15.87 L335.35 0.6 M334.00 15.87 L344.60 0.6 M343.25 15.87 L353.85 0.6 M352.50 15.87 L363.10 0.6 M361.75 15.87 L372.35 0.6 M371.00 15.87 L381.60 0.6 M380.25 15.87 L390.85 0.6 M389.50 15.87 L400.10 0.6 M398.75 15.87 L409.35 0.6 M408.00 15.87 L418.60 0.6 M417.25 15.87 L427.85 0.6 M426.50 15.87 L437.10 0.6 M435.75 15.87 L446.35 0.6 M445.00 15.87 L455.60 0.6 M454.25 15.87 L464.85 0.6" stroke="#333" stroke-width="1.15" fill="none"/></svg>
<svg style="position:absolute;left:705.50px;top:448.62px" width="15.8" height="15.8"><defs><radialGradient id="g247" cx="0.35" cy="0.3" r="0.75"><stop offset="0" stop-color="#ff9090"/><stop offset="0.55" stop-color="#e3141c"/><stop offset="1" stop-color="#5a0000"/></radialGradient></defs><circle cx="7.9" cy="7.9" r="6.9" fill="url(#g247)"/><path d="M6.300000000000001 4.9 L9.5 7.9 L6.300000000000001 10.9" fill="none" stroke="#fff" stroke-width="1.8" stroke-linecap="round" stroke-linejoin="round"/></svg>
<div style="position:absolute;left:747px;top:449.318px;width:426px;height:16.676000000000002px;background:#ff8080;"></div>
<div class="t" style="left:988.5px;top:452px;font-size:10.5px;letter-spacing:0.3px;color:#111;font-weight:normal;">OLT</div>
<div style="position:absolute;left:24px;top:465.98400000000004px;width:214px;height:16.676000000000002px;background:#d9dce6;"></div>
<svg style="position:absolute;left:0px;top:465.984px" width="30" height="17"><rect x="16.4" y="5.2" width="6.8" height="6.8" fill="#fff" stroke="#c4c4c4"/><path d="M17.7 8.6 H21.9" stroke="#222" stroke-width="1.1"/><path d="M19.8 6.5 V10.7" stroke="#222" stroke-width="1.1"/></svg>
<div class="t" style="left:27.2px;top:469px;font-size:10.5px;letter-spacing:0.3px;color:#111;font-weight:normal;">GEM port network CTP</div>
<div style="position:absolute;left:238px;top:465.98400000000004px;width:444px;height:16.676000000000002px;background:#ff8080;"></div>
<div class="t" style="left:488.3px;top:468px;font-size:10.5px;letter-spacing:0.3px;color:#111;font-weight:normal;">OLT</div>
<svg style="position:absolute;left:705.50px;top:465.28px" width="15.8" height="15.8"><defs><radialGradient id="g255" cx="0.35" cy="0.3" r="0.75"><stop offset="0" stop-color="#ff9090"/><stop offset="0.55" stop-color="#e3141c"/><stop offset="1" stop-color="#5a0000"/></radialGradient></defs><circle cx="7.9" cy="7.9" r="6.9" fill="url(#g255)"/><path d="M5.300000000000001 5.300000000000001 L10.5 10.5 M10.5 5.300000000000001 L5.300000000000001 10.5" stroke="#fff" stroke-width="2" stroke-linecap="round"/></svg>
<div style="position:absolute;left:747px;top:465.98400000000004px;width:426px;height:16.676000000000002px;background:#ff8080;"></div>
<div class="t" style="left:988.5px;top:468px;font-size:10.5px;letter-spacing:0.3px;color:#111;font-weight:normal;">OLT</div>
<div style="position:absolute;left:24px;top:482.65px;width:214px;height:16.676000000000002px;background:#d9dce6;"></div>
<svg style="position:absolute;left:0px;top:482.650px" width="30" height="17"><rect x="16.4" y="5.2" width="6.8" height="6.8" fill="#fff" stroke="#c4c4c4"/><path d="M17.7 8.6 H21.9" stroke="#222" stroke-width="1.1"/><path d="M19.8 6.5 V10.7" stroke="#222" stroke-width="1.1"/></svg>
<div class="t" style="left:27.2px;top:486px;font-size:10.5px;letter-spacing:0.3px;color:#111;font-weight:normal;">GEM port network CTP &lt;2&gt;</div>
<div style="position:absolute;left:238px;top:482.65px;width:444px;height:16.676000000000002px;background:#ff8080;"></div>
<div class="t" style="left:488.3px;top:485px;font-size:10.5px;letter-spacing:0.3px;color:#111;font-weight:normal;">OLT</div>
<svg style="position:absolute;left:705.50px;top:481.95px" width="15.8" height="15.8"><defs><radialGradient id="g263" cx="0.35" cy="0.3" r="0.75"><stop offset="0" stop-color="#ff9090"/><stop offset="0.55" stop-color="#e3141c"/><stop offset="1" stop-color="#5a0000"/></radialGradient></defs><circle cx="7.9" cy="7.9" r="6.9" fill="url(#g263)"/><path d="M5.300000000000001 5.300000000000001 L10.5 10.5 M10.5 5.300000000000001 L5.300000000000001 10.5" stroke="#fff" stroke-width="2" stroke-linecap="round"/></svg>
<div style="position:absolute;left:747px;top:482.65px;width:426px;height:16.676000000000002px;background:#ff8080;"></div>
<div class="t" style="left:988.5px;top:485px;font-size:10.5px;letter-spacing:0.3px;color:#111;font-weight:normal;">OLT</div>
<div style="position:absolute;left:24px;top:499.31600000000003px;width:214px;height:16.676000000000002px;background:#d9dce6;"></div>
<svg style="position:absolute;left:0px;top:499.316px" width="30" height="17"><rect x="16.4" y="5.2" width="6.8" height="6.8" fill="#fff" stroke="#c4c4c4"/><path d="M17.7 8.6 H21.9" stroke="#222" stroke-width="1.1"/><path d="M19.8 6.5 V10.7" stroke="#222" stroke-width="1.1"/></svg>
<div class="t" style="left:27.2px;top:503px;font-size:10.5px;letter-spacing:0.3px;color:#111;font-weight:normal;">GEM port network CTP &lt;3&gt;</div>
<div style="position:absolute;left:238px;top:499.31600000000003px;width:444px;height:16.676000000000002px;background:#ff8080;"></div>
<div class="t" style="left:488.3px;top:502px;font-size:10.5px;letter-spacing:0.3px;color:#111;font-weight:normal;">OLT</div>
<svg style="position:absolute;left:705.50px;top:498.62px" width="15.8" height="15.8"><defs><radialGradient id="g271" cx="0.35" cy="0.3" r="0.75"><stop offset="0" stop-color="#ff9090"/><stop offset="0.55" stop-color="#e3141c"/><stop offset="1" stop-color="#5a0000"/></radialGradient></defs><circle cx="7.9" cy="7.9" r="6.9" fill="url(#g271)"/><path d="M5.300000000000001 5.300000000000001 L10.5 10.5 M10.5 5.300000000000001 L5.300000000000001 10.5" stroke="#fff" stroke-width="2" stroke-linecap="round"/></svg>
<div style="position:absolute;left:747px;top:499.31600000000003px;width:426px;height:16.676000000000002px;background:#ff8080;"></div>
<div class="t" style="left:988.5px;top:502px;font-size:10.5px;letter-spacing:0.3px;color:#111;font-weight:normal;">OLT</div>
<div style="position:absolute;left:24px;top:515.982px;width:214px;height:16.676000000000002px;background:#d9dce6;"></div>
<svg style="position:absolute;left:0px;top:515.982px" width="30" height="17"><rect x="16.4" y="5.2" width="6.8" height="6.8" fill="#fff" stroke="#c4c4c4"/><path d="M17.7 8.6 H21.9" stroke="#222" stroke-width="1.1"/><path d="M19.8 6.5 V10.7" stroke="#222" stroke-width="1.1"/></svg>
<div class="t" style="left:27.2px;top:519px;font-size:10.5px;letter-spacing:0.3px;color:#111;font-weight:normal;">GEM port network CTP &lt;4&gt;</div>
<svg style="position:absolute;left:238px;top:515.98px" width="444.00" height="16.67"><path d="M1.00 15.87 L11.60 0.6 M10.25 15.87 L20.85 0.6 M19.50 15.87 L30.10 0.6 M28.75 15.87 L39.35 0.6 M38.00 15.87 L48.60 0.6 M47.25 15.87 L57.85 0.6 M56.50 15.87 L67.10 0.6 M65.75 15.87 L76.35 0.6 M75.00 15.87 L85.60 0.6 M84.25 15.87 L94.85 0.6 M93.50 15.87 L104.10 0.6 M102.75 15.87 L113.35 0.6 M112.00 15.87 L122.60 0.6 M121.25 15.87 L131.85 0.6 M130.50 15.87 L141.10 0.6 M139.75 15.87 L150.35 0.6 M149.00 15.87 L159.60 0.6 M158.25 15.87 L168.85 0.6 M167.50 15.87 L178.10 0.6 M176.75 15.87 L187.35 0.6 M186.00 15.87 L196.60 0.6 M195.25 15.87 L205.85 0.6 M204.50 15.87 L215.10 0.6 M213.75 15.87 L224.35 0.6 M223.00 15.87 L233.60 0.6 M232.25 15.87 L242.85 0.6 M241.50 15.87 L252.10 0.6 M250.75 15.87 L261.35 0.6 M260.00 15.87 L270.60 0.6 M269.25 15.87 L279.85 0.6 M278.50 15.87 L289.10 0.6 M287.75 15.87 L298.35 0.6 M297.00 15.87 L307.60 0.6 M306.25 15.87 L316.85 0.6 M315.50 15.87 L326.10 0.6 M324.75 15.87 L335.35 0.6 M334.00 15.87 L344.60 0.6 M343.25 15.87 L353.85 0.6 M352.50 15.87 L363.10 0.6 M361.75 15.87 L372.35 0.6 M371.00 15.87 L381.60 0.6 M380.25 15.87 L390.85 0.6 M389.50 15.87 L400.10 0.6 M398.75 15.87 L409.35 0.6 M408.00 15.87 L418.60 0.6 M417.25 15.87 L427.85 0.6 M426.50 15.87 L437.10 0.6 M435.75 15.87 L446.35 0.6 M445.00 15.87 L455.60 0.6 M454.25 15.87 L464.85 0.6" stroke="#333" stroke-width="1.15" fill="none"/></svg>
<svg style="position:absolute;left:705.50px;top:515.28px" width="15.8" height="15.8"><defs><radialGradient id="g278" cx="0.35" cy="0.3" r="0.75"><stop offset="0" stop-color="#ff9090"/><stop offset="0.55" stop-color="#e3141c"/><stop offset="1" stop-color="#5a0000"/></radialGradient></defs><circle cx="7.9" cy="7.9" r="6.9" fill="url(#g278)"/><path d="M6.300000000000001 4.9 L9.5 7.9 L6.300000000000001 10.9" fill="none" stroke="#fff" stroke-width="1.8" stroke-linecap="round" stroke-linejoin="round"/></svg>
<div style="position:absolute;left:747px;top:515.982px;width:426px;height:16.676000000000002px;background:#ff8080;"></div>
<div class="t" style="left:988.5px;top:518px;font-size:10.5px;letter-spacing:0.3px;color:#111;font-weight:normal;">OLT</div>
<div style="position:absolute;left:24px;top:532.648px;width:214px;height:16.676000000000002px;background:#d9dce6;"></div>
<svg style="position:absolute;left:0px;top:532.648px" width="30" height="17"><rect x="16.4" y="5.2" width="6.8" height="6.8" fill="#fff" stroke="#c4c4c4"/><path d="M17.7 8.6 H21.9" stroke="#222" stroke-width="1.1"/><path d="M19.8 6.5 V10.7" stroke="#222" stroke-width="1.1"/></svg>
<div class="t" style="left:27.2px;top:536px;font-size:10.5px;letter-spacing:0.3px;color:#111;font-weight:normal;">GEM traffic descriptor</div>
<div style="position:absolute;left:238px;top:532.648px;width:444px;height:16.676000000000002px;background:#ff8080;"></div>
<div class="t" style="left:488.3px;top:535px;font-size:10.5px;letter-spacing:0.3px;color:#111;font-weight:normal;">OLT</div>
<svg style="position:absolute;left:705.50px;top:531.95px" width="15.8" height="15.8"><defs><radialGradient id="g286" cx="0.35" cy="0.3" r="0.75"><stop offset="0" stop-color="#ff9090"/><stop offset="0.55" stop-color="#e3141c"/><stop offset="1" stop-color="#5a0000"/></radialGradient></defs><circle cx="7.9" cy="7.9" r="6.9" fill="url(#g286)"/><path d="M9.5 4.9 L6.300000000000001 7.9 L9.5 10.9" fill="none" stroke="#fff" stroke-width="1.8" stroke-linecap="round" stroke-linejoin="round"/></svg>
<svg style="position:absolute;left:747px;top:532.65px" width="426.00" height="16.67"><path d="M1.30 15.87 L11.90 0.6 M10.55 15.87 L21.15 0.6 M19.80 15.87 L30.40 0.6 M29.05 15.87 L39.65 0.6 M38.30 15.87 L48.90 0.6 M47.55 15.87 L58.15 0.6 M56.80 15.87 L67.40 0.6 M66.05 15.87 L76.65 0.6 M75.30 15.87 L85.90 0.6 M84.55 15.87 L95.15 0.6 M93.80 15.87 L104.40 0.6 M103.05 15.87 L113.65 0.6 M112.30 15.87 L122.90 0.6 M121.55 15.87 L132.15 0.6 M130.80 15.87 L141.40 0.6 M140.05 15.87 L150.65 0.6 M149.30 15.87 L159.90 0.6 M158.55 15.87 L169.15 0.6 M167.80 15.87 L178.40 0.6 M177.05 15.87 L187.65 0.6 M186.30 15.87 L196.90 0.6 M195.55 15.87 L206.15 0.6 M204.80 15.87 L215.40 0.6 M214.05 15.87 L224.65 0.6 M223.30 15.87 L233.90 0.6 M232.55 15.87 L243.15 0.6 M241.80 15.87 L252.40 0.6 M251.05 15.87 L261.65 0.6 M260.30 15.87 L270.90 0.6 M269.55 15.87 L280.15 0.6 M278.80 15.87 L289.40 0.6 M288.05 15.87 L298.65 0.6 M297.30 15.87 L307.90 0.6 M306.55 15.87 L317.15 0.6 M315.80 15.87 L326.40 0.6 M325.05 15.87 L335.65 0.6 M334.30 15.87 L344.90 0.6 M343.55 15.87 L354.15 0.6 M352.80 15.87 L363.40 0.6 M362.05 15.87 L372.65 0.6 M371.30 15.87 L381.90 0.6 M380.55 15.87 L391.15 0.6 M389.80 15.87 L400.40 0.6 M399.05 15.87 L409.65 0.6 M408.30 15.87 L418.90 0.6 M417.55 15.87 L428.15 0.6 M426.80 15.87 L437.40 0.6 M436.05 15.87 L446.65 0.6" stroke="#333" stroke-width="1.15" fill="none"/></svg>
<div style="position:absolute;left:24px;top:549.314px;width:214px;height:16.676000000000002px;background:#d9dce6;"></div>
<svg style="position:absolute;left:0px;top:549.314px" width="30" height="17"><rect x="16.4" y="5.2" width="6.8" height="6.8" fill="#fff" stroke="#c4c4c4"/><path d="M17.7 8.6 H21.9" stroke="#222" stroke-width="1.1"/><path d="M19.8 6.5 V10.7" stroke="#222" stroke-width="1.1"/></svg>
<div class="t" style="left:27.2px;top:553px;font-size:10.5px;letter-spacing:0.3px;color:#111;font-weight:normal;">GEM traffic descriptor &lt;2&gt;</div>
<div style="position:absolute;left:238px;top:549.314px;width:444px;height:16.676000000000002px;background:#ff8080;"></div>
<div class="t" style="left:488.3px;top:552px;font-size:10.5px;letter-spacing:0.3px;color:#111;font-weight:normal;">OLT</div>
<svg style="position:absolute;left:705.50px;top:548.61px" width="15.8" height="15.8"><defs><radialGradient id="g293" cx="0.35" cy="0.3" r="0.75"><stop offset="0" stop-color="#ff9090"/><stop offset="0.55" stop-color="#e3141c"/><stop offset="1" stop-color="#5a0000"/></radialGradient></defs><circle cx="7.9" cy="7.9" r="6.9" fill="url(#g293)"/><path d="M9.5 4.9 L6.300000000000001 7.9 L9.5 10.9" fill="none" stroke="#fff" stroke-width="1.8" stroke-linecap="round" stroke-linejoin="round"/></svg>
<svg style="position:absolute;left:747px;top:549.31px" width="426.00" height="16.67"><path d="M1.30 15.87 L11.90 0.6 M10.55 15.87 L21.15 0.6 M19.80 15.87 L30.40 0.6 M29.05 15.87 L39.65 0.6 M38.30 15.87 L48.90 0.6 M47.55 15.87 L58.15 0.6 M56.80 15.87 L67.40 0.6 M66.05 15.87 L76.65 0.6 M75.30 15.87 L85.90 0.6 M84.55 15.87 L95.15 0.6 M93.80 15.87 L104.40 0.6 M103.05 15.87 L113.65 0.6 M112.30 15.87 L122.90 0.6 M121.55 15.87 L132.15 0.6 M130.80 15.87 L141.40 0.6 M140.05 15.87 L150.65 0.6 M149.30 15.87 L159.90 0.6 M158.55 15.87 L169.15 0.6 M167.80 15.87 L178.40 0.6 M177.05 15.87 L187.65 0.6 M186.30 15.87 L196.90 0.6 M195.55 15.87 L206.15 0.6 M204.80 15.87 L215.40 0.6 M214.05 15.87 L224.65 0.6 M223.30 15.87 L233.90 0.6 M232.55 15.87 L243.15 0.6 M241.80 15.87 L252.40 0.6 M251.05 15.87 L261.65 0.6 M260.30 15.87 L270.90 0.6 M269.55 15.87 L280.15 0.6 M278.80 15.87 L289.40 0.6 M288.05 15.87 L298.65 0.6 M297.30 15.87 L307.90 0.6 M306.55 15.87 L317.15 0.6 M315.80 15.87 L326.40 0.6 M325.05 15.87 L335.65 0.6 M334.30 15.87 L344.90 0.6 M343.55 15.87 L354.15 0.6 M352.80 15.87 L363.40 0.6 M362.05 15.87 L372.65 0.6 M371.30 15.87 L381.90 0.6 M380.55 15.87 L391.15 0.6 M389.80 15.87 L400.40 0.6 M399.05 15.87 L409.65 0.6 M408.30 15.87 L418.90 0.6 M417.55 15.87 L428.15 0.6 M426.80 15.87 L437.40 0.6 M436.05 15.87 L446.65 0.6" stroke="#333" stroke-width="1.15" fill="none"/></svg>
</div>
<div style="position:absolute;left:1172px;top:0px;width:1px;height:567px;background:#fff;"></div>
</body></html>
